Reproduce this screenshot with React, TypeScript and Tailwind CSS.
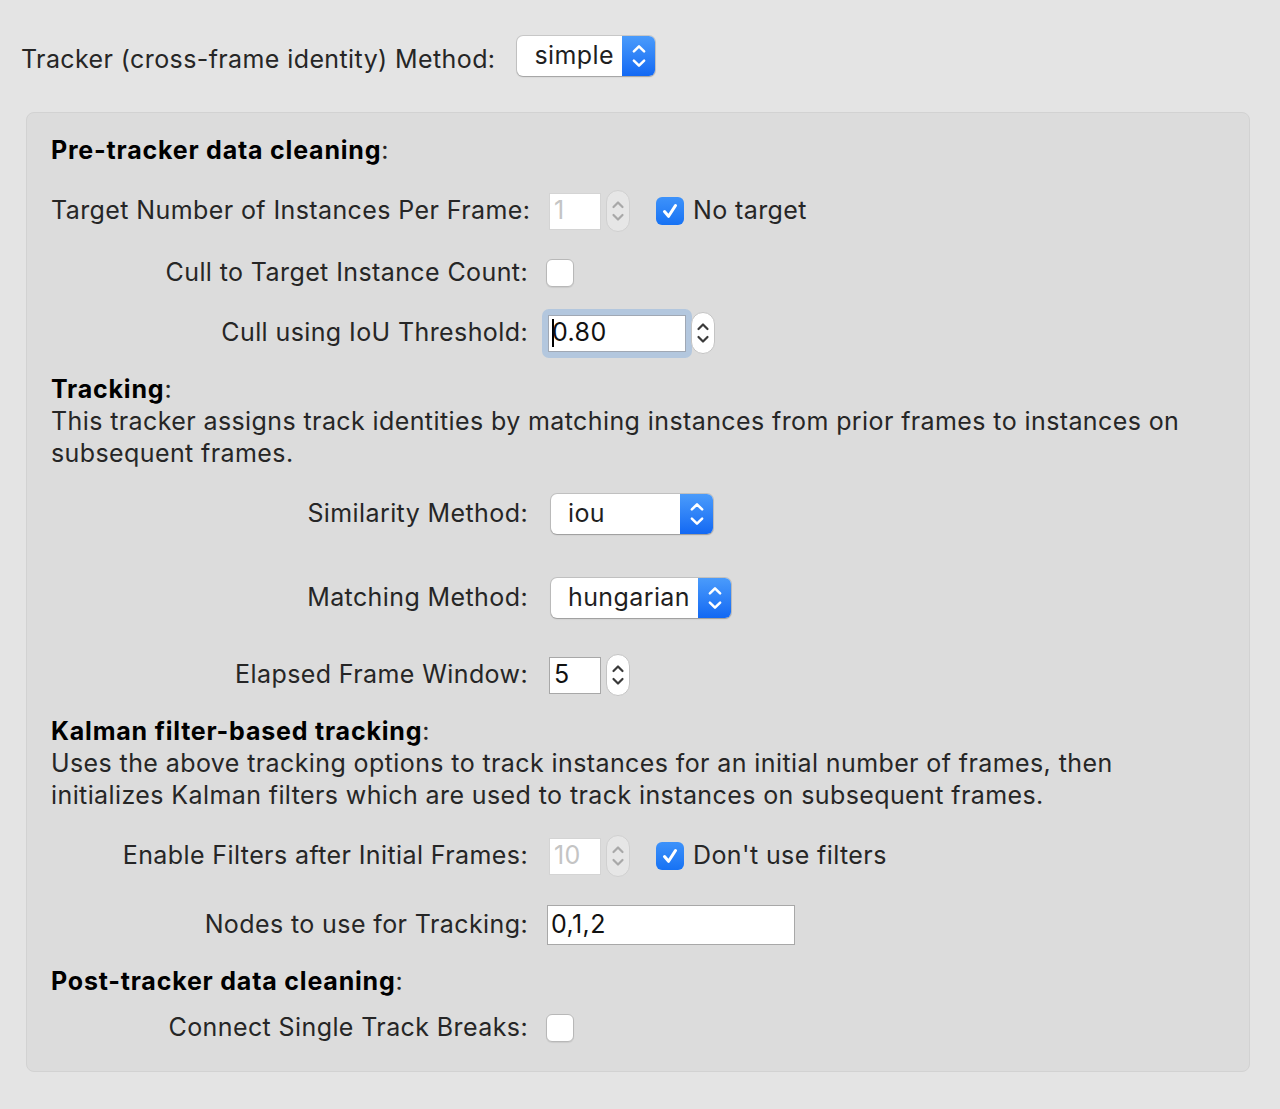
import React from 'react';

const font = { fontFamily: 'Inter, "Noto Sans", sans-serif' };

function Chevrons({ className = '' }: { className?: string }) {
  return (
    <svg viewBox="0 0 14 28" className={className} fill="none" stroke="currentColor" strokeWidth="2.2" strokeLinecap="round" strokeLinejoin="round">
      <path d="M2.5 10 L7 5.5 L11.5 10" />
      <path d="M2.5 18 L7 22.5 L11.5 18" />
    </svg>
  );
}

function Popup({ value, width }: { value: string; width: string }) {
  return (
    <div className={`flex h-[40px] ${width} rounded-[6px] bg-white shadow-[0_0_0_1px_rgba(0,0,0,0.12),0_1px_1.5px_rgba(0,0,0,0.2)] overflow-hidden`}>
      <div className="flex-1 flex items-center pl-[17px] text-[25px] tracking-[0.4px] text-[#1f1f1f]">{value}</div>
      <div className="w-[33px] flex items-center justify-center bg-gradient-to-b from-[#4a9bfb] to-[#1268f3] text-white">
        <Chevrons className="w-[16px] h-[32px]" />
      </div>
    </div>
  );
}

function Stepper({ disabled = false }: { disabled?: boolean }) {
  return (
    <div
      className={`w-[24px] h-[42px] rounded-[12px] flex items-center justify-center border ${
        disabled ? 'bg-[#e6e6e6] border-[#d0d0d0] text-[#a8a8a8]' : 'bg-white border-[#c4c4c4] text-[#3a3a3a]'
      }`}
    >
      <Chevrons className="w-[14px] h-[36px]" />
    </div>
  );
}

function Field({ value, disabled = false, width = 'w-[52px]' }: { value: string; disabled?: boolean; width?: string }) {
  return (
    <div
      className={`${width} h-[37px] bg-white border flex items-center pl-[4px] text-[25px] tracking-[0.4px] ${
        disabled ? 'border-[#d4d4d4] text-[#c4c4c4]' : 'border-[#a8a8a8] text-[#111]'
      }`}
    >
      {value}
    </div>
  );
}

function Checkbox({ checked = false }: { checked?: boolean }) {
  if (checked) {
    return (
      <div className="w-[28px] h-[28px] rounded-[6px] bg-gradient-to-b from-[#3d92fa] to-[#1672f4] flex items-center justify-center shrink-0">
        <svg viewBox="0 0 20 20" className="w-[22px] h-[22px]" fill="none" stroke="white" strokeWidth="2.8" strokeLinecap="round" strokeLinejoin="round">
          <path d="M5 10.5 L8.7 14.8 L15 5" />
        </svg>
      </div>
    );
  }
  return <div className="w-[28px] h-[28px] rounded-[6px] bg-white border border-[#b8b8b8] shadow-[0_1px_1px_rgba(0,0,0,0.08)] shrink-0" />;
}

function Row({ label, children, className = '', h = 'h-[42px]' }: { label: string; children: React.ReactNode; className?: string; h?: string }) {
  return (
    <div className={`grid grid-cols-[477px_1fr] gap-x-[21px] items-center ${h} ${className}`}>
      <div className="text-right text-[25px] tracking-[0.4px] text-[#262626] whitespace-nowrap">{label}</div>
      <div className="flex items-center">{children}</div>
    </div>
  );
}

function Heading({ bold, className = '' }: { bold: string; className?: string }) {
  return (
    <div className={`text-[25px] leading-[32px] text-[#262626] ${className}`}>
      <span className="font-bold text-black tracking-[0.8px]">{bold}</span>:
    </div>
  );
}

export default function App() {
  return (
    <div className="min-h-[1109px] w-[1280px] bg-[#e4e4e4] pt-[36px] px-[26px]" style={font}>
      <div className="flex items-center h-[40px]">
        <span className="text-[25px] tracking-[0.4px] text-[#262626] ml-[-5px] mr-[22px] pt-[7px]">Tracker (cross-frame identity) Method:</span>
        <Popup value="simple" width="w-[138px]" />
      </div>

      <div className="mt-[36px] w-[1224px] rounded-[8px] bg-[#dcdcdc] border border-[#d2d2d2] pt-[21px] pb-[22px] px-[24px]">
        <Heading bold="Pre-tracker data cleaning" />

        <Row label="Target Number of Instances Per Frame:" className="mt-[24px]">
          <Field value="1" disabled />
          <div className="ml-[5px]"><Stepper disabled /></div>
          <div className="ml-[26px]"><Checkbox checked /></div>
          <span className="ml-[9px] text-[25px] tracking-[0.4px] text-[#262626]">No target</span>
        </Row>

        <Row label="Cull to Target Instance Count:" className="mt-[20px]">
          <div className="ml-[-3px]"><Checkbox /></div>
        </Row>

        <Row label="Cull using IoU Threshold:" className="mt-[14px]" h="h-[50px]">
          <div className="ml-[-7px] p-[6px] rounded-[7px] bg-[#b3c7de]">
            <div className="w-[138px] h-[37px] bg-white border border-[#a0a8b4] flex items-center pl-[3px] text-[25px] tracking-[0.4px] text-[#111]">
              <span className="w-[2px] h-[28px] bg-black mr-[-2px]" />0.80
            </div>
          </div>
          <div className="ml-[-1px]"><Stepper /></div>
        </Row>

        <Heading bold="Tracking" className="mt-[15px]" />
        <div className="text-[25px] leading-[32px] tracking-[0.4px] text-[#262626]">
          This tracker assigns track identities by matching instances from prior frames to instances on subsequent frames.
        </div>

        <Row label="Similarity Method:" className="mt-[25px]" h="h-[40px]">
          <div className="ml-[2px]"><Popup value="iou" width="w-[162px]" /></div>
        </Row>

        <Row label="Matching Method:" className="mt-[44px]" h="h-[40px]">
          <div className="ml-[2px]"><Popup value="hungarian" width="w-[180px]" /></div>
        </Row>

        <Row label="Elapsed Frame Window:" className="mt-[36px]">
          <Field value="5" />
          <div className="ml-[5px]"><Stepper /></div>
        </Row>

        <Heading bold="Kalman filter-based tracking" className="mt-[19px]" />
        <div className="text-[25px] leading-[32px] tracking-[0.4px] text-[#262626] pr-[100px]">
          Uses the above tracking options to track instances for an initial number of frames, then initializes Kalman filters which are used to track instances on subsequent frames.
        </div>

        <Row label="Enable Filters after Initial Frames:" className="mt-[24px]">
          <Field value="10" disabled />
          <div className="ml-[5px]"><Stepper disabled /></div>
          <div className="ml-[26px]"><Checkbox checked /></div>
          <span className="ml-[9px] text-[25px] tracking-[0.4px] text-[#262626]">Don't use filters</span>
        </Row>

        <Row label="Nodes to use for Tracking:" className="mt-[28px]" h="h-[40px]">
          <div className="ml-[-2px] w-[248px] h-[40px] bg-white border border-[#a8a8a8] flex items-center pl-[3px] text-[25px] tracking-[0.4px] text-[#111]">0,1,2</div>
        </Row>

        <Heading bold="Post-tracker data cleaning" className="mt-[20px]" />

        <Row label="Connect Single Track Breaks:" className="mt-[10px]">
          <div className="ml-[-3px]"><Checkbox /></div>
        </Row>
      </div>
    </div>
  );
}
